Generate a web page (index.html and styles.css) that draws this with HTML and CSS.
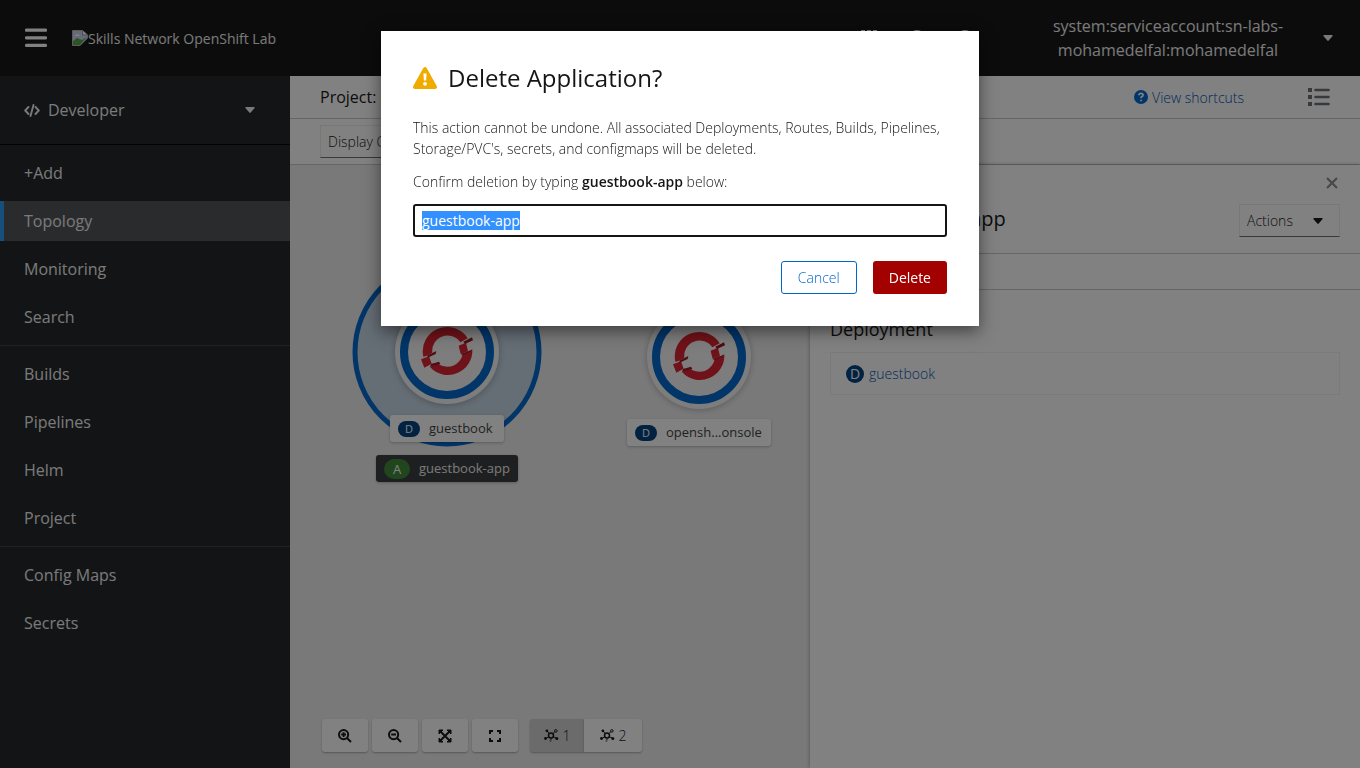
FILE: index.html
```html
<!DOCTYPE html>
<html lang="en">
<head>
<meta charset="utf-8">
<title>Topology</title>
<link rel="stylesheet" href="styles.css">
</head>
<body>
<svg class="symbols" aria-hidden="true">
  <symbol id="caret" viewBox="0 0 10 6"><path d="M1 0h8q1 0 .6.9L5.7 5.6q-.7.7-1.4 0L.4.9Q0 0 1 0z" fill="currentColor"/></symbol>
  <symbol id="openshift" viewBox="0 0 192 162">
    <path d="M25 92A73 73 0 0 1 158 37L136 49A46 46 0 0 0 52 80L37 89Z" fill="#db212e"/>
    <path d="M172 70A73 73 0 0 1 45 123L70 113A46 46 0 0 0 143 84Z" fill="#db212e"/>
    <path d="M18 100L42 91L50 113L28 125Z" fill="#db212e"/>
    <path d="M131 59L153 50L159 76L137 84Z" fill="#db212e"/>
    <path d="M39 88L64 75L62 84L36 96Z" fill="#9a1520"/>
    <path d="M48 114L72 107L76 113L45 123Z" fill="#9a1520"/>
    <path d="M145 47L171 34L174 43L150 54Z" fill="#9a1520"/>
    <path d="M137 84L170 73L165 77L143 87Z" fill="#9a1520"/>
  </symbol>
  <symbol id="nodes" viewBox="0 0 15 13">
    <g fill="none" stroke="currentColor" stroke-width="1"><circle cx="7" cy="6.500" r="2.500" stroke-width="1.500"/><circle cx="11.800" cy="1.900" r="1.300"/><path d="M5.200 4.500L3 2M9 4.600l1.800-1.800M4.700 7.800L2 9.500M9.300 7.800l3 1.400M7 9.500v1.500"/></g>
    <g fill="currentColor"><circle cx="2.900" cy="1.800" r="1.400"/><circle cx="1.500" cy="9.500" r="1.400"/><circle cx="12.800" cy="9.500" r="1.500"/><circle cx="6.500" cy="12" r="1" opacity=".5"/></g>
  </symbol>
</svg>

<div class="page">
  <header class="masthead">
    <button class="icon-button" aria-label="Global navigation"><svg width="22" height="20" viewBox="0 0 22 20"><path d="M1.500 2.200h19M1.500 9.800h19M1.500 17.400h19" stroke="#fff" stroke-width="3.200" stroke-linecap="round"/></svg></button>
    <a class="brand" href="#"><svg width="16" height="16" viewBox="0 0 16 16"><path d="M.5.5h10L15.500 5v10.500H.5z" fill="#c5d5f0" stroke="#b5b5b5"/><path d="M1 15v-4l4-3 5 2 5-3-7 8z" fill="#58a548"/><path d="M3 5.500q1-2 3-1 2 0 2 1.500H3z" fill="#fff"/><path d="M10.500.5V5h5" fill="#fff" stroke="#999"/><path d="M8 16l8-8v8z" fill="#151515"/></svg><span>Skills Network OpenShift Lab</span></a>
    <div class="tools">
      <button class="icon-button" aria-label="Applications"><svg width="16" height="16" viewBox="0 0 16 16"><path d="M0 0h4v4H0zm6 0h4v4H6zm6 0h4v4h-4zM0 6h4v4H0zm6 0h4v4H6zm6 0h4v4h-4zM0 12h4v4H0zm6 0h4v4H6zm6 0h4v4h-4z" fill="#fff"/></svg></button>
      <button class="icon-button" aria-label="Import"><svg width="16" height="18" viewBox="0 0 16 18"><circle cx="8" cy="9" r="8" fill="#fff"/><path d="M8 5v8M4 9h8" stroke="#151515" stroke-width="2"/></svg></button>
      <button class="icon-button" aria-label="Help"><svg width="16" height="18" viewBox="0 0 16 18"><circle cx="8" cy="9" r="8" fill="#fff"/><path d="M6 7q0-2 2-2t2 2q0 1-2 2v1m0 2v2" fill="none" stroke="#151515" stroke-width="2"/></svg></button>
    </div>
    <button class="user"><span>system:serviceaccount:sn-labs-mohamedelfal:mohamedelfal</span><svg width="10" height="6"><use href="#caret"/></svg></button>
  </header>

  <div class="body">
    <nav class="sidebar">
      <button class="perspective"><svg width="16" height="13" viewBox="0 0 16 13"><path d="M4.500 3L1.200 6.500l3.300 3.500M11.500 3l3.300 3.500-3.300 3.500M9.500 1l-3 11" fill="none" stroke="currentColor" stroke-width="1.900" stroke-linecap="round" stroke-linejoin="round"/></svg><span>Developer</span><svg class="end" width="10" height="6"><use href="#caret"/></svg></button>
      <ul><li><a href="#">+Add</a></li><li><a class="current" href="#">Topology</a></li><li><a href="#">Monitoring</a></li><li><a href="#">Search</a></li></ul>
      <ul><li><a href="#">Builds</a></li><li><a href="#">Pipelines</a></li><li><a href="#">Helm</a></li><li><a href="#">Project</a></li></ul>
      <ul><li><a href="#">Config Maps</a></li><li><a href="#">Secrets</a></li></ul>
    </nav>

    <main class="main">
      <div class="project-bar">
        <button class="project">Project: sn-labs</button>
        <a class="shortcuts" href="#"><svg width="14" height="14" viewBox="0 0 14 14"><circle cx="7" cy="7" r="7" fill="#06c"/><path d="M4.900 5.300Q5 3.400 7 3.400t2.100 1.700Q9.100 6.200 7.700 6.800 7 7.200 7 8.200M7 9.700v1.600" fill="none" stroke="#fff" stroke-width="1.700"/></svg>View shortcuts</a>
        <button class="icon-button" aria-label="List view"><svg width="22" height="18" viewBox="0 0 22 18"><path d="M0 0h4v4H0zm0 7h4v4H0zm0 7h4v4H0z" fill="#6a6e73"/><path d="M7.500 2h13M7.500 9h13M7.500 16h13" stroke="#6a6e73" stroke-width="2.600" stroke-linecap="round"/></svg></button>
      </div>
      <div class="filter-bar"><button class="select">Display Options<svg width="10" height="6"><use href="#caret"/></svg></button></div>

      <div class="workspace">
        <section class="canvas" aria-label="Topology graph">
          <svg class="graph" width="520" height="340" viewBox="0 0 520 340">
            <circle cx="157" cy="187" r="92" fill="#c6d6e6" stroke="#06c" stroke-width="5"/>
            <g class="node"><circle class="disc" cx="157" cy="187" r="52"/><circle class="ring" cx="157" cy="187" r="43"/><use href="#openshift" x="125" y="161" width="64" height="54"/></g>
            <g class="node"><circle class="disc" cx="409" cy="192" r="52"/><circle class="ring" cx="409" cy="192" r="43"/><use href="#openshift" x="377" y="166" width="64" height="54"/></g>
          </svg>
          <div class="tag tag-guestbook"><b>D</b>guestbook</div>
          <div class="tag tag-console"><b>D</b>opensh...onsole</div>
          <div class="tag tag-app"><b>A</b>guestbook-app</div>
          <div class="controls">
            <button aria-label="Zoom in"><svg width="14" height="14" viewBox="0 0 14 14"><circle cx="5.600" cy="5.600" r="4.600"/><path d="M9.200 9.200L13 13M5.600 3.200v4.800M3.200 5.600H8"/></svg></button>
            <button aria-label="Zoom out"><svg width="14" height="14" viewBox="0 0 14 14"><circle cx="5.600" cy="5.600" r="4.600"/><path d="M9.200 9.200L13 13M3.200 5.600H8"/></svg></button>
            <button aria-label="Fit to screen"><svg width="14" height="14" viewBox="0 0 14 14"><path d="M2.500 2.500l9 9M11.500 2.500l-9 9"/><path d="M1 5V1h4zM9 1h4v4zM1 9v4h4zM13 9v4H9z" fill="currentColor" stroke-width="1"/></svg></button>
            <button aria-label="Reset view"><svg width="14" height="14" viewBox="0 0 14 14"><path d="M2 5V2h3M9 2h3v3M2 9v3h3M12 9v3H9"/></svg></button>
            <div class="layouts"><button class="active"><svg width="15" height="13"><use href="#nodes"/></svg>1</button><button><svg width="15" height="13"><use href="#nodes"/></svg>2</button></div>
          </div>
        </section>

        <aside class="details">
          <div class="details-head">
            <button class="icon-button close" aria-label="Close"><svg width="12" height="12" viewBox="0 0 12 12"><path d="M1 1l10 10M11 1L1 11" stroke="#8a8d90" stroke-width="2.200"/></svg></button>
            <div class="title-row"><b aria-hidden="true"></b><h1>guestbook-app</h1><button class="select actions">Actions<svg width="10" height="6"><use href="#caret"/></svg></button></div>
          </div>
          <div class="tabs"></div>
          <div class="resources"><h2>Deployment</h2><div class="resource"><b>D</b><a href="#">guestbook</a></div></div>
        </aside>
      </div>
    </main>
  </div>
</div>

<div class="backdrop">
  <form class="modal" role="dialog" aria-modal="true" aria-labelledby="modal-title">
    <h1 id="modal-title"><svg width="24" height="22" viewBox="0 0 24 22"><path d="M10.300 1Q12-1 13.700 1l10 18q1 2.800-1.700 3H2q-2.700-.2-1.700-3z" fill="#f0ab00"/><path d="M10.400 6.500h3.200l-.5 7h-2.200z" fill="#fff"/><circle cx="12" cy="16.800" r="1.900" fill="#fff"/></svg>Delete Application?</h1>
    <p>This action cannot be undone. All associated Deployments, Routes, Builds, Pipelines, Storage/PVC's, secrets, and configmaps will be deleted.</p>
    <label for="confirm">Confirm deletion by typing <strong>guestbook-app</strong> below:</label>
    <input id="confirm" type="text" value="guestbook-app" autocomplete="off" spellcheck="false">
    <div class="modal-actions"><button type="button" class="cancel">Cancel</button><button type="submit" class="delete">Delete</button></div>
  </form>
</div>
<script src="app.js"></script>
</body>
</html>
```
FILE: styles.css
```css
* { box-sizing: border-box; }
body { margin: 0; font-family: "Open Sans", "Noto Sans", sans-serif; font-size: 14px; line-height: 21px; color: #151515; }
button, input { font: inherit; color: inherit; }
button { background: none; border: 0; padding: 0; display: flex; align-items: center; }
a { color: #004fb0; text-decoration: none; }
h1, h2, p, ul { margin: 0; padding: 0; font-weight: 400; }
ul { list-style: none; }
svg { flex: none; }
.symbols { position: absolute; width: 0; height: 0; }

.page { display: flex; flex-direction: column; min-height: 100vh; }
.masthead { display: flex; align-items: center; min-height: 76px; padding: 0 27px 0 25px; background: #151515; color: #f0f0f0; }
.brand { display: flex; align-items: center; margin-left: 25px; color: #f0f0f0; }
.tools { display: flex; gap: 32px; margin-left: auto; }
.user { gap: 30px; margin-left: 70px; font-size: 16px; line-height: 24px; }
.user span { width: 250px; text-align: center; }

.body { display: flex; flex: 1; }
.sidebar { flex: none; width: 290px; background: #212427; color: #f0f0f0; font-size: 16px; line-height: 24px; }
.perspective { width: 100%; height: 69px; gap: 8px; padding: 0 35px 0 24px; border-bottom: 1px solid #000; }
.perspective .end { margin-left: auto; }
.sidebar ul { display: grid; gap: 8px; padding: 8px 0; border-bottom: 1px solid #3c3f42; }
.sidebar ul:last-child { border-bottom: 0; }
.sidebar a { display: block; padding: 8px 24px; color: #f0f0f0; }
.sidebar .current { padding-left: 20px; border-left: 4px solid #2b9af3; background: #4f5255; }

.main { display: flex; flex: 1; flex-direction: column; min-width: 0; background: #fff; }
.project-bar { display: flex; align-items: center; height: 43px; padding: 0 30px; border-bottom: 1px solid #c8c9ca; }
.project { font-size: 16px; }
.shortcuts { display: flex; align-items: center; gap: 4px; margin: 0 64px 0 auto; font-weight: 300; }
.filter-bar { padding: 6px 30px; border-bottom: 1px solid #c8c9ca; }
.select { height: 33px; gap: 20px; padding: 0 7px; border: 1px solid #ededed; border-bottom-color: #6a6e73; font-weight: 300; }

.workspace { display: flex; flex: 1; }
.canvas { position: relative; display: flex; flex: 1; min-height: 600px; background: #efefef; }
.graph { position: absolute; top: 0; left: 0; }
.disc { fill: #f7f7f7; }
.ring { fill: #f7f7f7; stroke: #06c; stroke-width: 8px; }
.node { filter: drop-shadow(0 1px 3px rgba(3, 3, 3, .25)); }
.tag { position: absolute; display: flex; align-items: center; gap: 9px; height: 27px; padding: 0 8px; border-radius: 3px; background: #fff; box-shadow: 0 1px 3px rgba(3, 3, 3, .25); color: #3c3f42; font-size: 13px; white-space: nowrap; }
.tag b { flex: none; width: 22px; border-radius: 8px; background: #004080; color: #fff; font-size: 11px; font-weight: 400; line-height: 16px; text-align: center; }
.tag-guestbook { top: 250px; left: 100px; width: 114px; }
.tag-console { top: 254px; left: 337px; width: 144px; }
.tag-app { top: 290px; left: 86px; width: 142px; background: #393b3d; color: #f0f0f0; }
.tag-app b { width: 26px; border-radius: 10px; background: #3e8635; font-size: 13px; line-height: 20px; }

.controls { display: flex; gap: 4px; margin: auto auto 16px 32px; }
.controls button { justify-content: center; width: 46px; height: 33px; border-radius: 3px; background: #fff; box-shadow: 0 1px 2px rgba(3, 3, 3, .3); }
.controls > button > svg { fill: none; stroke: currentColor; stroke-width: 2px; }
.layouts { display: flex; margin-left: 8px; }
.controls .layouts button { width: 54px; gap: 4px; border-radius: 3px 0 0 3px; font-weight: 300; }
.controls .layouts button:last-child { width: 58px; border-radius: 0 3px 3px 0; }
.controls .layouts .active { background: #d2d2d2; }

.details { z-index: 1; flex: none; width: 550px; background: #fff; box-shadow: 0 0 4px rgba(3, 3, 3, .35); }
.details-head { padding: 12px 20px 16px; border-bottom: 1px solid #c8c9ca; }
.close { margin: 0 2px 15px auto; }
.title-row { display: flex; align-items: center; gap: 8px; }
.title-row h1 { padding-bottom: 4px; font-size: 20px; line-height: 28px; }
.title-row b { width: 28px; height: 28px; border-radius: 14px; background: #3e8635; }
.actions { justify-content: space-between; width: 101px; margin-left: auto; padding-right: 17px; }
.tabs { height: 36px; border-bottom: 1px solid #c8c9ca; }
.resources { padding: 25px 20px; }
.resources h2 { font-size: 18px; line-height: 28px; }
.resource { display: flex; align-items: center; gap: 5px; height: 43px; margin-top: 9px; padding: 0 15px; border: 1px solid #f0f0f0; font-weight: 300; }
.resource b { width: 18px; border-radius: 9px; background: #004080; color: #fff; font-weight: 400; line-height: 18px; text-align: center; }

.backdrop { position: fixed; inset: 0; z-index: 2; overflow: auto; padding: 31px 0; background: rgba(3, 3, 3, .5); }
.modal { width: 598px; max-width: 100%; margin: 0 auto; padding: 32px; background: #fff; box-shadow: 0 5px 15px rgba(0, 0, 0, .5); }
.modal h1 { display: flex; align-items: center; gap: 11px; margin-bottom: 24px; font-size: 24px; line-height: 30px; }
.modal p, .modal label { display: block; margin-bottom: 12px; font-weight: 300; }
.modal strong { font-weight: 600; }
.modal input { display: block; width: 100%; height: 33px; padding: 0 7px; border: 2px solid #151515; border-radius: 3px; outline: 0; }
.modal input::selection { background: #3390ff; color: #fff; }
.modal-actions { display: flex; justify-content: flex-end; gap: 16px; margin-top: 24px; }
.modal-actions button { height: 33px; padding: 0 16px; border-radius: 3px; }
.modal-actions .cancel { border: 1px solid #06c; color: #06c; font-weight: 300; }
.modal-actions .delete { background: #a30000; color: #fff; }
```
FILE: app.js
```js
var field = document.getElementById("confirm");
field.focus();
field.select();
```
